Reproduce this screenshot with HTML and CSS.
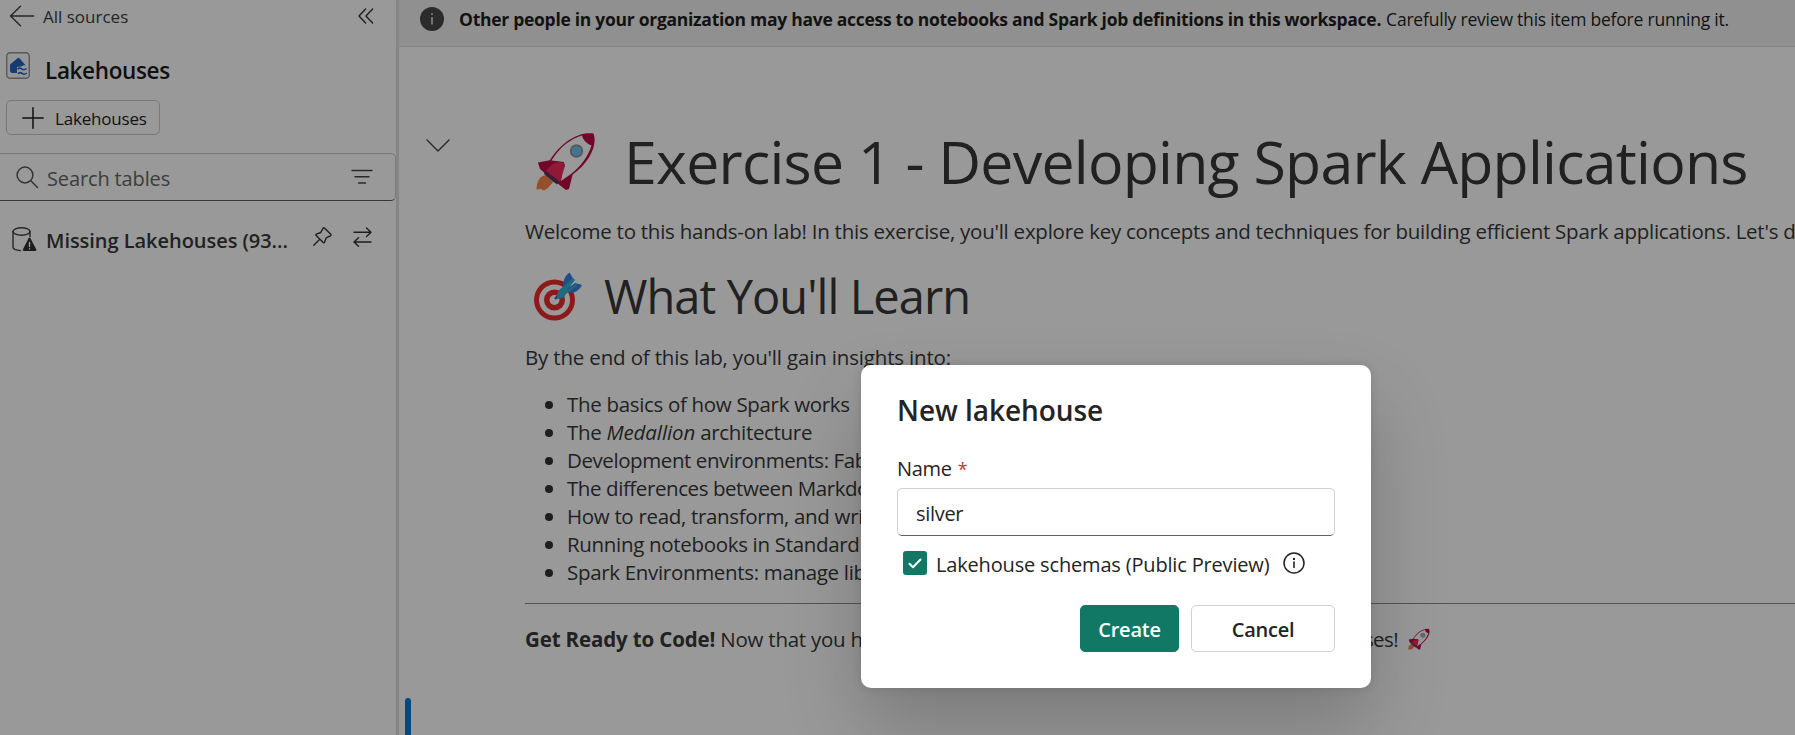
FILE: index.html
```html
<!DOCTYPE html>
<html lang="en">
<head>
<meta charset="utf-8">
<title>Lakehouses</title>
<link rel="stylesheet" href="styles.css">
</head>
<body>
<svg class="defs" width="0" height="0">
  <symbol id="rocket" viewBox="0 0 60 60">
    <path d="M12 44C4 44 1 49 .500 58.500L5 58l3 1.500L12 57l6-7z" fill="#f9844a"/>
    <path d="M15 29L2 31.500 4 38l8 7 18 14 3-1 4-16z" fill="#be0a43"/>
    <path d="M57.500 2.500C43 0 25 11 14 29L9.500 40 24 52 36 44C53 32 62 14 57.500 2.500z" fill="#be0a43"/>
    <path d="M46 4.500C34 8 24 16 15.500 29.500L28 31 25 50l10-7C44 36 52 26 55.500 14.500 51 13 47 9 46 4.500z" fill="#fff"/>
    <path d="M16 33.500Q22 30 28 32q1.500 1 1 3L24 51 9.500 40z" fill="#f2295b"/>
    <path d="M9.500 39.500L23 50.500 21 53.500 8 43z" fill="#533566"/>
    <circle cx="40.500" cy="20" r="6.700" fill="#8f979c"/>
    <circle cx="40.500" cy="20" r="4.800" fill="#74c2f2"/>
  </symbol>
</svg>
<div class="app">
  <aside class="sidebar">
    <div class="crumb">
      <svg width="26" height="24" viewBox="0 0 26 24" fill="none" stroke="#424242" stroke-width="1.400" stroke-linecap="round" stroke-linejoin="round"><path d="M24.500 12H1.500M11.500 2.200L1.500 12l10 9.800"/></svg>
      <span class="crumb-label">All sources</span>
      <svg class="collapse" width="16" height="16" viewBox="0 0 16 16" fill="none" stroke="#333" stroke-width="1.400" stroke-linecap="round" stroke-linejoin="round"><path d="M7.600 1L1 8l6.600 7M14.600 1L8 8l6.600 7"/></svg>
    </div>
    <div class="heading">
      <svg width="24" height="27" viewBox="0 0 24 27"><rect x=".7" y=".7" width="22.600" height="25.600" rx="3.500" fill="#fbfbfb" stroke="#949494" stroke-width="1.400"/><path d="M4 12.500L11.500 6.200Q12.500 5.500 13.500 6.200L19.800 13.500Q17.500 12.500 15.500 14.500L11 15v6H6.500Q4 21 4 18.500z" fill="#2563c4"/><path d="M11.500 17.300q2-2.200 4.200-.4t4.800-.4M12 21.800q2-2.200 4.200-.4t4.500-.4" fill="none" stroke="#2563c4" stroke-width="1.500"/></svg>
      <h2 class="heading-label">Lakehouses</h2>
    </div>
    <button class="add">
      <svg width="22" height="22" viewBox="0 0 22 22" fill="none" stroke="#1a1a1a" stroke-width="1.500" stroke-linecap="round"><path d="M11 .8v20.400M.8 11h20.400"/></svg>
      <span class="add-label">Lakehouses</span>
    </button>
    <div class="search">
      <svg width="23" height="23" viewBox="0 0 23 23" fill="none" stroke="#555" stroke-width="1.500" stroke-linecap="round"><circle cx="9" cy="9" r="7.900"/><path d="M14.800 14.800L21.500 21.500"/></svg>
      <span class="search-label">Search tables</span>
      <svg class="filter" width="22" height="16" viewBox="0 0 22 16" fill="none" stroke="#444" stroke-width="1.400" stroke-linecap="round"><path d="M1 1.500h20M4 7.800h14M7.500 14h7"/></svg>
    </div>
    <div class="source">
      <svg width="25" height="25" viewBox="0 0 25 25" fill="none" stroke="#424242" stroke-width="1.400" stroke-linecap="round"><ellipse cx="9.500" cy="4.500" rx="8.500" ry="3.700"/><path d="M1 4.500v15.500c0 1.800 3 3.300 7.500 3.600M18 4.500v5"/><path d="M16.600 11.300q.9-1.500 1.800 0l5.800 11q.6 1.700-1 1.700H12q-1.700 0-1-1.700z" fill="#303030" stroke="none"/><path d="M17.500 15.500v4M17.500 21.800v.1" stroke="#fff" stroke-width="1.400"/></svg>
      <span class="source-label">Missing Lakehouses (93...</span>
      <svg class="pin" width="19" height="19" viewBox="0 0 19 19" fill="none" stroke="#333" stroke-width="1.400" stroke-linecap="round" stroke-linejoin="round"><path d="M.8 18.200L6 13M11.700 1.200l6.100 6.100q.7 1-.4 1.500l-4.200 2.100-1.700 4.400q-.5.900-1.300.2L3 8.300q-.6-.8.300-1.200l4.400-1.600 2.300-4.200q.7-1 1.700-.1z"/></svg>
      <svg class="swap" width="19" height="20" viewBox="0 0 19 20" fill="none" stroke="#333" stroke-width="1.400" stroke-linecap="round" stroke-linejoin="round"><path d="M1 5.200h17M13.500 1L18 5.200l-4.500 4.300M18 15H1M5.500 10.700L1 15l4.500 4.200"/></svg>
    </div>
  </aside>
  <main class="main">
    <div class="banner">
      <svg width="24" height="24" viewBox="0 0 24 24"><circle cx="12" cy="12" r="12" fill="#484848"/><path d="M12 10v7.500M12 6.300v1.600" stroke="#e6e6e6" stroke-width="1.500"/></svg>
      <p class="banner-text"><b class="banner-bold">Other people in your organization may have access to notebooks and Spark job definitions in this workspace.</b><span class="banner-more">Carefully review this item before running it.</span></p>
    </div>
    <div class="cell">
      <div class="gutter"><svg width="24" height="13" viewBox="0 0 24 13" fill="none" stroke="#424242" stroke-width="1.400" stroke-linecap="round" stroke-linejoin="round"><path d="M1 1l11 11L23 1"/></svg></div>
      <article class="doc">
        <h1 class="title"><svg class="title-icon" width="60" height="60"><use href="#rocket"/></svg><span>Exercise 1 - Developing Spark Applications</span></h1>
        <p class="para intro">Welcome to this hands-on lab! In this exercise, you'll explore key concepts and techniques for building efficient Spark applications. Let's dive in!</p>
        <h2 class="subtitle"><svg class="subtitle-icon" width="49" height="49" viewBox="0 0 49 49"><circle cx="20.500" cy="28" r="20.500" fill="#e82c2c"/><circle cx="20.500" cy="28" r="15.500" fill="#fff"/><circle cx="20.500" cy="28" r="10.500" fill="#e82c2c"/><circle cx="20.500" cy="28" r="5" fill="#fff"/><path d="M21 27l10-11" stroke="#5a6870" stroke-width="2.500"/><path d="M29 14Q29 5 35.500 .500L40 8 34 17zM33 17l8-6 7 2Q45 20 36 21z" fill="#3b7fe0"/><path d="M39 6l2 2-9 11 10-7 1 2-11 8q-2 5-9 5-1-6 3-10l4-3z" fill="#32b3d6"/></svg><span>What You'll Learn</span></h2>
        <p class="para by">By the end of this lab, you'll gain insights into:</p>
        <ul class="topics">
          <li>The basics of how Spark works</li>
          <li>The <em>Medallion</em> architecture</li>
          <li class="tight">Development environments: Fabric</li>
          <li class="tight">The differences between Markdown</li>
          <li>How to read, transform, and write</li>
          <li>Running notebooks in Standard</li>
          <li>Spark Environments: manage libraries</li>
        </ul>
        <hr class="rule">
        <div class="ready"><p class="para"><b class="ready-bold">Get Ready to Code!</b> Now that you have</p><p class="para tail">exercises!<svg width="22" height="22"><use href="#rocket"/></svg></p></div>
      </article>
    </div>
    <div class="next-cell"></div>
  </main>
</div>
<div class="overlay">
  <section class="dialog">
    <h2 class="dialog-title">New lakehouse</h2>
    <label class="field-label"><span>Name</span><span class="star">*</span></label>
    <div class="field">silver</div>
    <div class="option">
      <span class="check"><svg width="14" height="11" viewBox="0 0 14 11" fill="none" stroke="#fff" stroke-width="2" stroke-linecap="round" stroke-linejoin="round"><path d="M1.500 5.700L5 9.200 12.500 1.500"/></svg></span>
      <span class="option-label">Lakehouse schemas (Public Preview)</span>
      <svg class="info" width="22" height="22" viewBox="0 0 22 22"><circle cx="11" cy="11" r="10" fill="none" stroke="#242424" stroke-width="1.500"/><path d="M11 10v5.500" stroke="#242424" stroke-width="1.600" stroke-linecap="round"/><circle cx="11" cy="6.900" r="1.200" fill="#242424"/></svg>
    </div>
    <div class="actions">
      <button class="btn primary">Create</button>
      <button class="btn">Cancel</button>
    </div>
  </section>
</div>
</body>
</html>
```
FILE: styles.css
```css
* { box-sizing: border-box; }
body { margin: 0; width: 1795px; height: 735px; overflow: hidden; background: #fff; color: #383838; font-family: "Open Sans", "Noto Sans", sans-serif; }
h1, h2, p, ul, button { margin: 0; padding: 0; font: inherit; }
svg { display: block; flex: none; }
.defs { position: absolute; }
.app { display: flex; height: 735px; white-space: nowrap; }

.sidebar { width: 399px; flex: none; border-right: 3px solid #dedede; }
.crumb { display: flex; align-items: center; height: 32px; padding-left: 9px; }
.crumb-label { margin-left: 8px; font-size: 17px; letter-spacing: 0; line-height: 24px; padding-top: 1px; color: #3d3d3d; }
.collapse { margin-left: auto; margin-right: 22px; }
.heading { display: flex; height: 68px; padding: 20px 0 0 6px; }
.heading-label { margin: 3px 0 0 15px; font-size: 22.500px; font-weight: 600; line-height: 32px; letter-spacing: -0.35px; color: #1c1c1c; }
.add { display: flex; align-items: center; width: 154px; height: 35px; margin-left: 6px; padding-left: 15px; background: transparent; border: 1px solid #c9c9c9; border-radius: 5px; color: #222; }
.add-label { margin-left: 11px; padding-top: 2px; font-size: 17px; letter-spacing: -0.2px; }
.search { display: flex; align-items: center; height: 48px; margin-top: 18px; padding: 0 22px 0 16px; border: 1px solid #c9c9c9; border-left: 0; border-bottom-color: #5c5c5c; border-radius: 0 5px 5px 0; }
.search-label { margin-left: 8px; padding-top: 3px; font-size: 20px; letter-spacing: -0.13px; color: #666; }
.filter { margin-left: auto; }
.source { display: flex; align-items: center; height: 50px; margin-top: 12px; padding: 2px 24px 0 12px; }
.source-label { margin-left: 9px; padding-top: 2px; font-size: 20px; font-weight: 600; letter-spacing: -0.04px; color: #383838; }
.pin { margin: -6px 21px 0 auto; }
.swap { margin-top: -4px; }

.main { flex: 1; min-width: 0; overflow: hidden; }
.banner { display: flex; align-items: center; height: 47px; padding: 0 0 9px 21px; background: #f1f1f1; border-bottom: 1px solid #dcdcdc; }
.banner-text { display: flex; gap: 5px; margin-left: 15px; padding-top: 1px; font-size: 17.500px; color: #1f1f1f; }
.banner-bold { font-weight: 700; letter-spacing: -0.28px; }
.banner-more { letter-spacing: -0.21px; }
.cell { display: flex; height: 651px; padding-top: 73px; }
.gutter { width: 126px; flex: none; padding: 19px 0 0 27px; }
.doc { flex: 1; min-width: 0; }
.title { display: flex; height: 80px; font-size: 59px; line-height: 82px; letter-spacing: -0.75px; }
.title-icon { margin: 11px 28px 0 11px; }
.para { font-size: 20.500px; line-height: 28px; letter-spacing: -0.25px; }
.intro { margin-top: 17px; }
.subtitle { display: flex; height: 60px; margin-top: 20px; font-size: 47px; line-height: 62px; letter-spacing: -0.93px; }
.subtitle-icon { margin: 7px 21px 0 9px; }
.by { margin-top: 18px; letter-spacing: -0.17px; }
.topics { margin: 19px 0 0; padding-left: 42px; font-size: 20.500px; line-height: 28px; letter-spacing: -0.32px; list-style: none; }
.topics em { letter-spacing: -0.1px; }
.topics .tight { letter-spacing: -0.42px; }
.topics li::before { content: ""; display: inline-block; width: 8px; height: 8px; margin: 0 14px 3px -22px; border-radius: 50%; background: #333; }
.rule { height: 1px; margin: 17px 0 0; border: 0; background: #8c8c8c; }
.ready { display: flex; justify-content: space-between; width: 905px; margin-top: 21px; }
.ready-bold { font-weight: 700; letter-spacing: -0.14px; }
.tail { display: flex; align-items: center; gap: 10px; letter-spacing: -0.6px; }
.next-cell { width: 6px; height: 60px; margin-left: 6px; border-radius: 3px 3px 0 0; background: #0078d4; }

.overlay { position: absolute; top: 0; left: 0; width: 1795px; height: 735px; padding: 365px 0 0 861px; overflow: hidden; background: rgba(0, 0, 0, 0.4); }
.dialog { width: 510px; height: 323px; padding: 27px 36px 0; border-radius: 10px; background: #fff; color: #242424; white-space: nowrap; box-shadow: 0 0 10px rgba(0, 0, 0, 0.12), 0 40px 80px rgba(0, 0, 0, 0.2); }
.dialog-title { font-size: 28px; font-weight: 600; line-height: 36px; letter-spacing: -0.05px; }
.field-label { display: flex; gap: 6px; margin-top: 27px; font-size: 20px; line-height: 28px; letter-spacing: -0.3px; }
.star { color: #d13438; font-size: 18px; }
.field { width: 438px; height: 48px; margin-top: 5px; padding-left: 18px; border: 1px solid #d1d1d1; border-bottom-color: #616161; border-radius: 5px; font-size: 20px; line-height: 50px; letter-spacing: -0.3px; }
.option { display: flex; align-items: center; height: 24px; margin: 15px 0 0 6px; }
.check { display: flex; align-items: center; justify-content: center; width: 24px; height: 24px; border-radius: 3px; background: #117865; }
.option-label { margin-left: 9px; padding-top: 3px; font-size: 20px; line-height: 28px; letter-spacing: -0.17px; }
.info { margin-left: auto; margin-right: 30px; }
.actions { display: flex; justify-content: flex-end; gap: 12px; width: 438px; margin-top: 30px; }
.btn { width: 144px; height: 47px; padding-top: 1px; border: 1px solid #d1d1d1; border-radius: 5px; background: #fff; color: #242424; font-size: 20px; font-weight: 600; letter-spacing: -0.25px; }
.primary { width: 99px; border-color: #117865; background: #117865; color: #fff; }
```
